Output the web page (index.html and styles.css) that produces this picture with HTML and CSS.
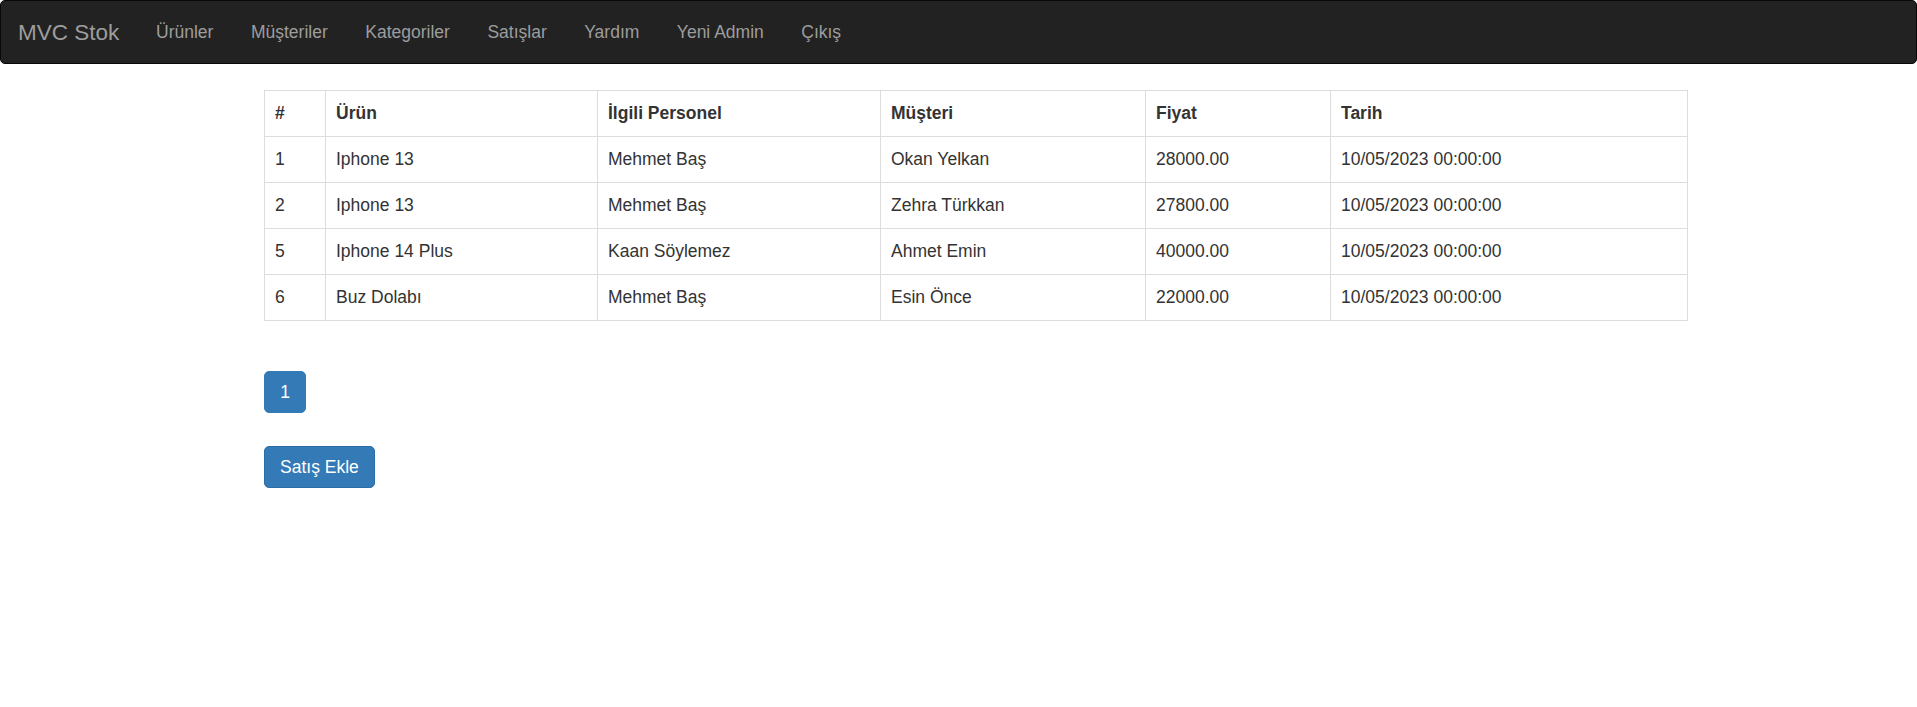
FILE: index.html
```html
<!DOCTYPE html>
<html lang="tr">
<head>
<meta charset="utf-8">
<title>MVC Stok</title>
<link rel="stylesheet" href="styles.css">
</head>
<body>
<nav class="navbar">
  <a class="brand" href="#">MVC Stok</a>
  <ul class="nav">
    <li><a href="#">Ürünler</a></li>
    <li><a href="#">Müşteriler</a></li>
    <li><a href="#">Kategoriler</a></li>
    <li><a href="#">Satışlar</a></li>
    <li><a href="#">Yardım</a></li>
    <li><a href="#">Yeni Admin</a></li>
    <li><a href="#">Çıkış</a></li>
  </ul>
</nav>
<main class="content">
  <table class="table">
    <colgroup>
      <col class="c1"><col class="c2"><col class="c3"><col class="c4"><col class="c5"><col>
    </colgroup>
    <thead>
      <tr><th>#</th><th>Ürün</th><th>İlgili Personel</th><th>Müşteri</th><th>Fiyat</th><th>Tarih</th></tr>
    </thead>
    <tbody>
      <tr><td>1</td><td>Iphone 13</td><td>Mehmet Baş</td><td>Okan Yelkan</td><td>28000.00</td><td>10/05/2023 00:00:00</td></tr>
      <tr><td>2</td><td>Iphone 13</td><td>Mehmet Baş</td><td>Zehra Türkkan</td><td>27800.00</td><td>10/05/2023 00:00:00</td></tr>
      <tr><td>5</td><td>Iphone 14 Plus</td><td>Kaan Söylemez</td><td>Ahmet Emin</td><td>40000.00</td><td>10/05/2023 00:00:00</td></tr>
      <tr><td>6</td><td>Buz Dolabı</td><td>Mehmet Baş</td><td>Esin Önce</td><td>22000.00</td><td>10/05/2023 00:00:00</td></tr>
    </tbody>
  </table>
  <ul class="pagination">
    <li><a class="active" href="#">1</a></li>
  </ul>
  <a class="btn" href="#">Satış Ekle</a>
</main>
</body>
</html>
```

FILE: styles.css
```css
* { box-sizing: border-box; }
html, body {
  margin: 0;
  padding: 0;
  background: #fff;
  font-family: "Liberation Sans", Arial, Helvetica, sans-serif;
  font-size: 17.5px;
  line-height: 25px;
  color: #333;
}
a { text-decoration: none; }

.navbar {
  display: flex;
  align-items: stretch;
  height: 64px;
  background: #222;
  border: 1px solid #080808;
  border-radius: 5px;
  margin-bottom: 26px;
}
.brand {
  display: block;
  padding: 19px 18px 0 17px;
  font-size: 22.5px;
  line-height: 25px;
  color: #9d9d9d;
}
.nav {
  display: flex;
  margin: 0;
  padding: 0;
  list-style: none;
}
.nav a {
  display: block;
  padding: 19px 18.75px;
  line-height: 25px;
  color: #9d9d9d;
}

.content {
  padding-left: 264px;
  width: 1688px;
}
.table {
  width: 1424px;
  border-collapse: collapse;
  border: 1px solid #ddd;
  margin-bottom: 25px;
}
.c1 { width: 61px; }
.c2 { width: 272px; }
.c3 { width: 283px; }
.c4 { width: 265px; }
.c5 { width: 185px; }
.table th, .table td {
  border: 1px solid #ddd;
  padding: 10px;
  line-height: 25px;
  text-align: left;
  vertical-align: top;
}
.table th { font-weight: bold; }

.pagination {
  display: flex;
  list-style: none;
  padding: 0;
  margin: 50px 0 33px;
}
.pagination a {
  display: block;
  width: 42px;
  height: 42px;
  line-height: 40px;
  text-align: center;
  border: 1px solid #337ab7;
  border-radius: 5px;
  background: #337ab7;
  color: #fff;
}
.btn {
  display: inline-block;
  height: 42px;
  padding: 0 15px;
  line-height: 40px;
  background: #337ab7;
  border: 1px solid #2e6da4;
  border-radius: 5px;
  color: #fff;
}
```
